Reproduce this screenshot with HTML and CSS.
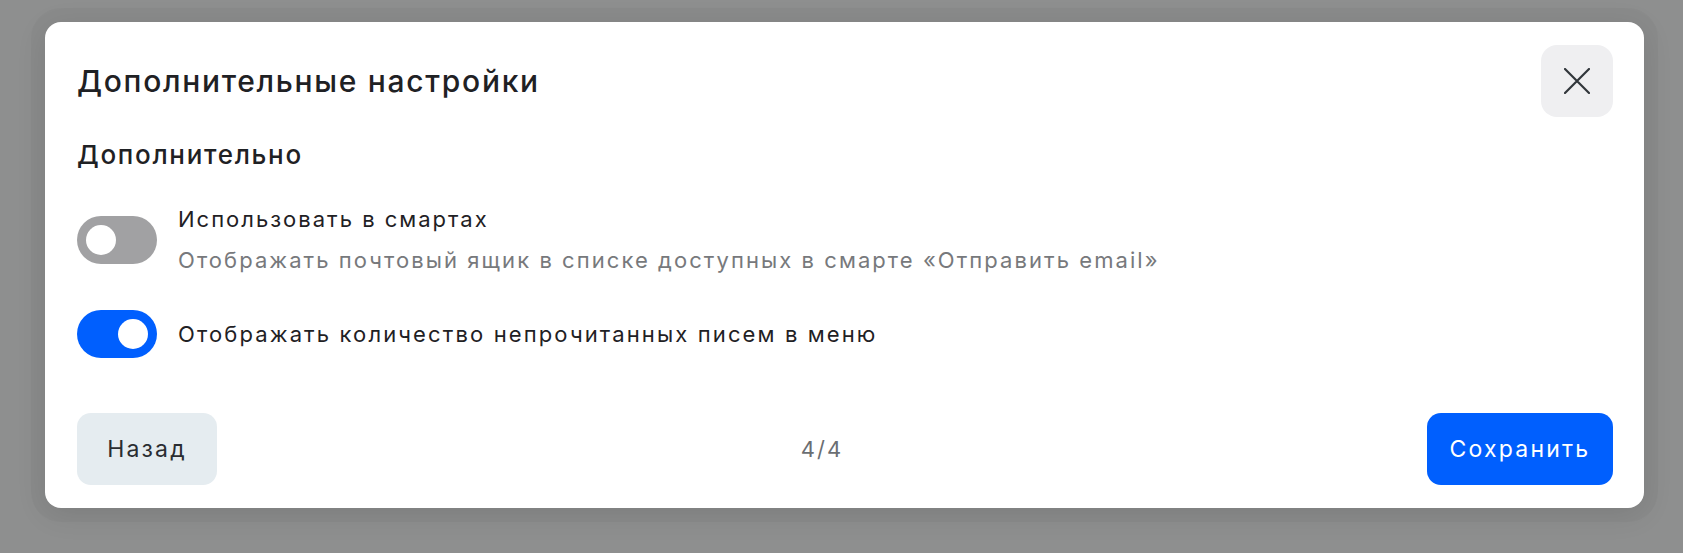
FILE: index.html
```html
<!DOCTYPE html>
<html lang="ru">
<head>
<meta charset="utf-8">
<title>Дополнительные настройки</title>
<link rel="stylesheet" href="styles.css">
</head>
<body>
<div class="overlay">
  <div class="modal">
    <div class="modal-header">
      <h1 class="modal-title">Дополнительные настройки</h1>
      <button class="close-btn" aria-label="Закрыть">
        <svg width="26" height="26" viewBox="0 0 26 26" fill="none">
          <path d="M1 1L25 25M25 1L1 25" stroke="#31363b" stroke-width="2.2" stroke-linecap="round"/>
        </svg>
      </button>
    </div>
    <h2 class="section-title">Дополнительно</h2>
    <div class="options">
      <div class="option">
        <span class="toggle"><span class="knob"></span></span>
        <div class="option-text">
          <div class="option-label">Использовать в смартах</div>
          <div class="option-desc">Отображать почтовый ящик в списке доступных в смарте «Отправить email»</div>
        </div>
      </div>
      <div class="option">
        <span class="toggle toggle-on"><span class="knob"></span></span>
        <div class="option-text">
          <div class="option-label option-label-wide">Отображать количество непрочитанных писем в меню</div>
        </div>
      </div>
    </div>
    <div class="modal-footer">
      <button class="btn btn-secondary">Назад</button>
      <span class="steps">4/4</span>
      <button class="btn btn-primary">Сохранить</button>
    </div>
  </div>
</div>
</body>
</html>
```
FILE: styles.css
```css
* { box-sizing: border-box; }
html, body { margin: 0; padding: 0; }
body {
  background: #8e8f8f;
  font-family: "Inter", "Noto Sans", sans-serif;
  color: #222426;
  width: 1683px;
  height: 553px;
  overflow: hidden;
}
.overlay {
  padding: 22px 39px 0 45px;
}
.modal {
  width: 1599px;
  height: 486px;
  background: #ffffff;
  border-radius: 16px;
  box-shadow: 0 6px 30px rgba(0,0,0,0.10), 0 0 0 14px rgba(0,0,0,0.025);
  padding: 23px 31px 23px 32px;
  display: flex;
  flex-direction: column;
}
.modal-header {
  display: flex;
  align-items: center;
  justify-content: space-between;
  height: 72px;
}
.modal-title {
  margin: 0;
  font-size: 30px;
  font-weight: 500;
  line-height: 36px;
  color: #1f2124;
  letter-spacing: 1.7px;
}
.close-btn {
  width: 72px;
  height: 72px;
  border: none;
  border-radius: 16px;
  background: #efeff1;
  display: flex;
  align-items: center;
  justify-content: center;
  padding: 0;
}
.section-title {
  margin: 22px 0 0;
  font-size: 26px;
  font-weight: 500;
  line-height: 32px;
  color: #1f2124;
  letter-spacing: 1.7px;
}
.options {
  margin-top: 34px;
  display: flex;
  flex-direction: column;
  gap: 36px;
}
.option {
  display: flex;
  align-items: center;
  gap: 21px;
}
.toggle {
  flex: none;
  width: 80px;
  height: 48px;
  border-radius: 24px;
  background: #a1a1a3;
  display: flex;
  align-items: center;
  padding: 0 9px;
}
.toggle-on {
  background: #005ffe;
  justify-content: flex-end;
}
.knob {
  width: 30px;
  height: 30px;
  border-radius: 50%;
  background: #ffffff;
}
.option-text {
  display: flex;
  flex-direction: column;
  gap: 13px;
}
.option-label {
  font-size: 22px;
  line-height: 28px;
  color: #1f2124;
  letter-spacing: 2px;
}
.option-label-wide {
  letter-spacing: 2.12px;
}
.option-desc {
  font-size: 22px;
  line-height: 28px;
  color: #77797c;
  letter-spacing: 2.06px;
}
.modal-footer {
  margin-top: auto;
  display: flex;
  align-items: center;
  justify-content: space-between;
}
.btn {
  height: 72px;
  border: none;
  border-radius: 14px;
  font-family: inherit;
  font-size: 23px;
  letter-spacing: 2.2px;
  padding: 0;
}
.btn-secondary {
  background: #e5ecf0;
  color: #2a2d31;
  width: 140px;
}
.btn-primary {
  background: #005ffe;
  color: #ffffff;
  width: 186px;
}
.steps {
  font-size: 22px;
  letter-spacing: 2px;
  color: #6b6e72;
}
```
